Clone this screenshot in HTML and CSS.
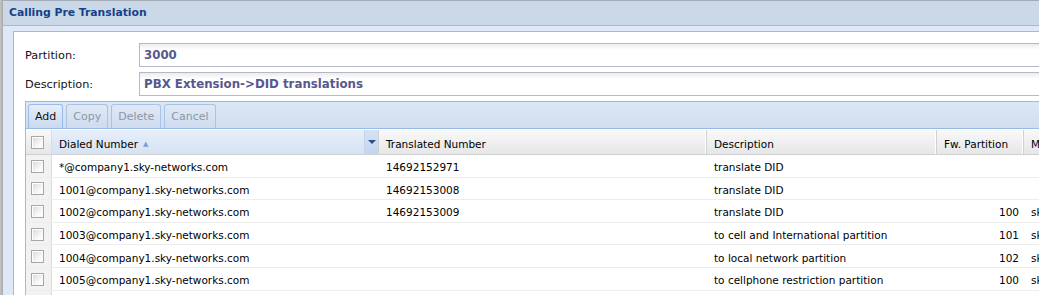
FILE: index.html
```html
<!DOCTYPE html>
<html>
<head>
<meta charset="utf-8">
<link rel="stylesheet" href="styles.css">
</head>
<body>
<div class="app">
  <div class="edge"></div>
  <div class="window">
    <div class="titlebar">Calling Pre Translation</div>
    <div class="frame">
      <div class="panel">
        <div class="form-row">
          <label class="label">Partition:</label>
          <div class="input">3000</div>
        </div>
        <div class="form-row">
          <label class="label">Description:</label>
          <div class="input">PBX Extension-&gt;DID translations</div>
        </div>
        <div class="grid">
          <div class="toolbar">
            <span class="btn">Add</span>
            <span class="btn disabled">Copy</span>
            <span class="btn disabled">Delete</span>
            <span class="btn disabled">Cancel</span>
          </div>
          <div class="row header">
            <div class="cell check"><span class="cb"></span></div>
            <div class="cell hd sorted">Dialed Number <span class="sort">&#9650;</span><span class="trigger"><span class="tri"></span></span></div>
            <div class="cell hd">Translated Number</div>
            <div class="cell hd">Description</div>
            <div class="cell hd">Fw. Partition</div>
            <div class="cell hd">Mask</div>
          </div>
          <div class="row">
            <div class="cell check"><span class="cb"></span></div>
            <div class="cell">*@company1.sky-networks.com</div>
            <div class="cell">14692152971</div>
            <div class="cell">translate DID</div>
            <div class="cell num"></div>
            <div class="cell"></div>
          </div>
          <div class="row">
            <div class="cell check"><span class="cb"></span></div>
            <div class="cell">1001@company1.sky-networks.com</div>
            <div class="cell">14692153008</div>
            <div class="cell">translate DID</div>
            <div class="cell num"></div>
            <div class="cell"></div>
          </div>
          <div class="row">
            <div class="cell check"><span class="cb"></span></div>
            <div class="cell">1002@company1.sky-networks.com</div>
            <div class="cell">14692153009</div>
            <div class="cell">translate DID</div>
            <div class="cell num">100</div>
            <div class="cell">sky-networks</div>
          </div>
          <div class="row">
            <div class="cell check"><span class="cb"></span></div>
            <div class="cell">1003@company1.sky-networks.com</div>
            <div class="cell"></div>
            <div class="cell">to cell and International partition</div>
            <div class="cell num">101</div>
            <div class="cell">sky-networks</div>
          </div>
          <div class="row">
            <div class="cell check"><span class="cb"></span></div>
            <div class="cell">1004@company1.sky-networks.com</div>
            <div class="cell"></div>
            <div class="cell">to local network partition</div>
            <div class="cell num">102</div>
            <div class="cell">sky-networks</div>
          </div>
          <div class="row">
            <div class="cell check"><span class="cb"></span></div>
            <div class="cell">1005@company1.sky-networks.com</div>
            <div class="cell"></div>
            <div class="cell">to cellphone restriction partition</div>
            <div class="cell num">100</div>
            <div class="cell">sky-networks</div>
          </div>
          <div class="row">
            <div class="cell check"><span class="cb"></span></div>
            <div class="cell"></div>
            <div class="cell"></div>
            <div class="cell"></div>
            <div class="cell num"></div>
            <div class="cell"></div>
          </div>
        </div>
      </div>
    </div>
  </div>
</div>
</body>
</html>
```
FILE: styles.css
```css
html, body {
  margin: 0;
  padding: 0;
  background: #fff;
  overflow: hidden;
}
body {
  font-family: "DejaVu Sans", Verdana, sans-serif;
  font-size: 10.5px;
  color: #000;
}
.app {
  display: flex;
  width: 1039px;
  height: 295px;
  overflow: hidden;
}
.edge {
  width: 3px;
  flex: none;
  background: linear-gradient(to right, #c4c4c4, #a9a9a9);
}
.window {
  flex: none;
  width: 1120px;
  display: flex;
  flex-direction: column;
  border-top: 1px solid #a3abb8;
  background: #dfe8f6;
}
.titlebar {
  height: 24px;
  line-height: 24px;
  padding-left: 6px;
  background: #cbd8e7;
  border-bottom: 1px solid #99bbe8;
  color: #15428b;
  font-weight: bold;
  font-size: 10.8px;
}
.frame {
  flex: 1;
  padding: 5px 0 0 10px;
  background: #dfe8f6;
}
.panel {
  height: 100%;
  background: #fff;
  border-left: 1px solid #99bbe8;
  border-top: 1px solid #99bbe8;
  padding: 11px 0 0 11px;
  box-sizing: border-box;
}
.form-row {
  display: flex;
  align-items: center;
  margin-bottom: 5px;
}
.label {
  width: 114px;
  flex: none;
  font-size: 11.3px;
  color: #111;
}
.input {
  flex: 1;
  height: 22px;
  line-height: 22px;
  border: 1px solid #b5b8c8;
  background: linear-gradient(to bottom, #ececec, #fff 6px, #fff);
  padding-left: 4px;
  font-weight: bold;
  font-size: 11.8px;
  color: #575790;
}
.grid {
  margin-top: 1px;
  border-left: 1px solid #99bbe8;
  border-top: 1px solid #99bbe8;
}
.toolbar {
  height: 26px;
  display: flex;
  align-items: flex-end;
  gap: 3px;
  padding-left: 2px;
  background: linear-gradient(to bottom, #dce7f5, #d0def0);
  border-bottom: 1px solid #99bbe8;
}
.btn {
  height: 23px;
  line-height: 24px;
  padding: 0 6px;
  border: 1px solid #99bbe8;
  border-bottom: none;
  border-radius: 3px 3px 0 0;
  background: linear-gradient(to bottom, #e6eef9, #c9d9ee);
  font-size: 11px;
  color: #111;
}
.btn.disabled {
  color: #8a97a8;
  background: linear-gradient(to bottom, #dfe8f5, #cfdcef);
  border-color: #a9c3e6;
}
.row {
  display: grid;
  grid-template-columns: 26px 327px 328px 230px 87px 120px;
  height: 22.6px;
  border-bottom: 1px solid #ededed;
  box-sizing: border-box;
}
.row .cell {
  padding-top: 3px;
}
.row .cell.check {
  padding-top: 1px;
}
.row.header {
  height: 25px;
  margin-top: 1px;
  border-bottom: 1px solid #d0d0d0;
  background: linear-gradient(to bottom, #f9f9f9, #e5e6e8);
}
.row.header .cell {
  padding-top: 3px;
}
.row.header .cell.check {
  padding-top: 1px;
}
.cell {
  display: flex;
  align-items: center;
  padding-left: 7px;
  white-space: nowrap;
  overflow: hidden;
  min-width: 0;
  box-sizing: border-box;
}
.cell.num {
  justify-content: flex-end;
  padding-right: 5px;
}
.cell.check {
  padding-left: 5px;
  background: #f2f2f2;
  border-right: 1px solid #dcdcdc;
}
.header .cell.check {
  background: transparent;
}
.cb {
  width: 11px;
  height: 11px;
  border: 1px solid #a7a7a7;
  background: linear-gradient(135deg, #d8d8d8, #fafafa 70%);
  box-shadow: inset 1px 1px 0 #fff;
}
.hd {
  border-right: 1px solid #d0d0d0;
  box-shadow: inset -1px 0 0 #fff;
}
.hd.sorted {
  position: relative;
  background: linear-gradient(to bottom, #e7eff9, #d5e3f4);
}
.sort {
  color: #7a9fd4;
  font-size: 7px;
  margin-left: 5px;
}
.trigger {
  position: absolute;
  right: 0;
  top: 0;
  bottom: 0;
  width: 13px;
  background: linear-gradient(to bottom, #d4e2f4, #c2d6f0);
  border-left: 1px solid #c5d6ec;
  display: flex;
  align-items: center;
  justify-content: center;
}
.tri {
  width: 0;
  height: 0;
  border-left: 4px solid transparent;
  border-right: 4px solid transparent;
  border-top: 4px solid #2e4f86;
}
```
